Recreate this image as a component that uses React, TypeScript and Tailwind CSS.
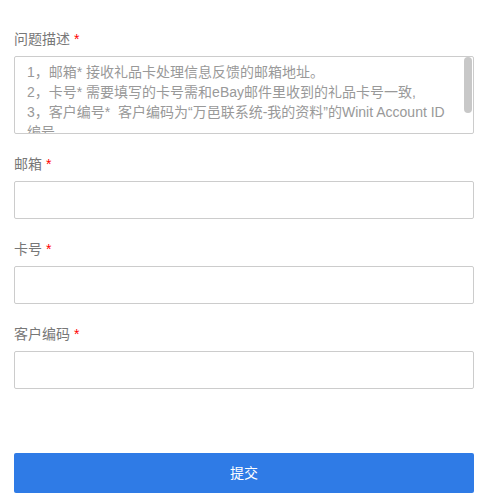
import React from "react";

const font = { fontFamily: '"Liberation Sans", "Noto Sans CJK SC", sans-serif' };

function Label({ text }: { text: string }) {
  return (
    <div className="h-5 leading-5 text-[14px] text-[#777] mb-[7px]">
      {text} <span className="text-[#f00]">*</span>
    </div>
  );
}

export default function App() {
  return (
    <div className="bg-white w-[496px] h-[501px] overflow-hidden" style={font}>
      <div className="ml-[14px] w-[460px] pt-[29px]">
        <div>
          <Label text="问题描述" />
          <div className="relative h-[78px] border border-[#ccc] rounded-[2px] overflow-hidden">
            <div className="pl-[12px] pr-[20px] pt-[5px] text-[14px] leading-5 text-[#999]">
              <div>1，邮箱* 接收礼品卡处理信息反馈的邮箱地址。</div>
              <div>2，卡号* 需要填写的卡号需和eBay邮件里收到的礼品卡号一致,</div>
              <div>3，客户编号*&nbsp; 客户编码为“万邑联系统-我的资料”的Winit Account ID 编号</div>
            </div>
            <div className="absolute right-[1px] top-0 w-[8px] h-[56px] rounded-[4px] bg-[#c8c8c8]" />
          </div>
        </div>
        <div className="mt-5">
          <Label text="邮箱" />
          <div className="h-[38px] border border-[#ccc] rounded-[2px]" />
        </div>
        <div className="mt-5">
          <Label text="卡号" />
          <div className="h-[38px] border border-[#ccc] rounded-[2px]" />
        </div>
        <div className="mt-5">
          <Label text="客户编码" />
          <div className="h-[38px] border border-[#ccc] rounded-[2px]" />
        </div>
        <button className="mt-[64px] w-full h-[40px] rounded-[2px] bg-[#2f7be6] text-white text-[14px] flex items-center justify-center">
          提交
        </button>
      </div>
    </div>
  );
}
